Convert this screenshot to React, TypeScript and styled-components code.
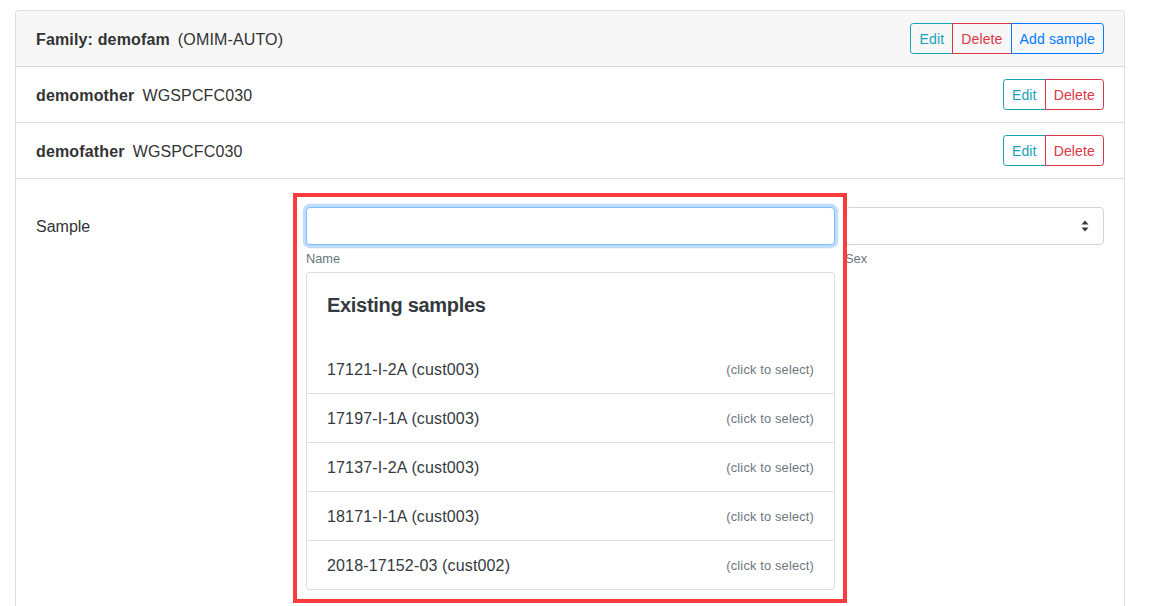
import React from "react";
import styled, { createGlobalStyle } from "styled-components";

const Global = createGlobalStyle`
  html, body { margin: 0; padding: 0; overflow: hidden; background: #fff; }
  body {
    font-family: "Liberation Sans", Arial, Helvetica, sans-serif;
    font-size: 16px;
    line-height: 1.5;
    color: #212529;
  }
  * { box-sizing: border-box; }
`;

const Page = styled.div`
  padding: 10px 0 0 15px;
`;

const Card = styled.div`
  width: 1110px;
  border: 1px solid rgba(0, 0, 0, 0.125);
  border-radius: 4px;
  background: #fff;
`;

const Row = styled.div<{ $header?: boolean }>`
  display: flex;
  align-items: center;
  justify-content: space-between;
  padding: 12px 20px;
  border-bottom: 1px solid rgba(0, 0, 0, 0.125);
  background: ${(p) => (p.$header ? "rgba(0,0,0,0.03)" : "#fff")};
  border-radius: ${(p) => (p.$header ? "3px 3px 0 0" : "0")};
`;

const Title = styled.div`
  display: flex;
  gap: 8px;
  align-items: baseline;
  padding-top: 2px;
  letter-spacing: 0.15px;
  color: #333;
`;

const Strong = styled.span`
  font-weight: 700;
`;

const BtnGroup = styled.div`
  display: flex;
`;

const colors = { info: "#17a2b8", danger: "#dc3545", primary: "#007bff" };

const Btn = styled.button<{ $v: keyof typeof colors }>`
  font-family: inherit;
  font-size: 14px;
  line-height: 21px;
  letter-spacing: 0.15px;
  padding: 5px 8px 3px;
  background: transparent;
  color: ${(p) => colors[p.$v]};
  border: 1px solid ${(p) => colors[p.$v]};
  border-radius: 0;
  margin-left: -1px;
  cursor: pointer;
  &:first-child { border-radius: 3.2px 0 0 3.2px; margin-left: 0; }
  &:last-child { border-radius: 0 3.2px 3.2px 0; }
  &:nth-child(n + 2) { position: relative; z-index: 1; }
`;

const Body = styled.div`
  padding: 28px 20px 20px;
  display: grid;
  grid-template-columns: 260px 1fr;
  column-gap: 10px;
`;

const Label = styled.label`
  padding-top: 8px;
  line-height: 24px;
  color: #333;
`;

const Fields = styled.div`
  display: grid;
  grid-template-columns: 529px 1fr;
  column-gap: 10px;
  align-items: start;
`;

const Field = styled.div`
  display: flex;
  flex-direction: column;
`;

const Highlight = styled(Field)`
  position: relative;
  &::after {
    content: "";
    position: absolute;
    left: -13px;
    right: -12px;
    top: -14px;
    bottom: -13px;
    border: 4px solid #fc3c3c;
    pointer-events: none;
    z-index: 5;
  }
`;

const Input = styled.input`
  height: 38px;
  width: 100%;
  font-family: inherit;
  font-size: 16px;
  padding: 6px 12px;
  border: 1px solid #80bdff;
  border-radius: 4px;
  outline: none;
  box-shadow: 0 0 0 3.2px rgba(0, 123, 255, 0.25);
`;

const SelectBox = styled.div`
  height: 38px;
  border: 1px solid #ced4da;
  border-radius: 4px;
  display: flex;
  align-items: center;
  justify-content: flex-end;
  padding-right: 14px;
`;

const Help = styled.small`
  margin-top: 4px;
  font-size: 12.8px;
  line-height: 19px;
  color: #6c757d;
`;

const Dropdown = styled.div`
  margin-top: 4px;
  border: 1px solid rgba(0, 0, 0, 0.125);
  border-radius: 4px;
  background: #fff;
`;

const DropHead = styled.div`
  padding: 20px;
`;

const DropTitle = styled.h5`
  margin: 0 0 8px;
  font-size: 20px;
  line-height: 24px;
  font-weight: 700;
  letter-spacing: -0.3px;
  color: #343a40;
`;

const Item = styled.div`
  display: flex;
  justify-content: space-between;
  align-items: center;
  padding: 13px 20px 11px;
  line-height: 24px;
  letter-spacing: 0.15px;
  color: #343a40;
  & + & { border-top: 1px solid rgba(0, 0, 0, 0.125); }
`;

const Hint = styled.small`
  font-size: 12.8px;
  letter-spacing: 0.18px;
  color: #6c757d;
`;

const members = ["demomother", "demofather"];
const samples = [
  "17121-I-2A (cust003)",
  "17197-I-1A (cust003)",
  "17137-I-2A (cust003)",
  "18171-I-1A (cust003)",
  "2018-17152-03 (cust002)",
];

const SelectArrows = () => (
  <svg width="8" height="12" viewBox="0 0 8 12">
    <path d="M4 0.5 L7.5 4.5 H0.5 Z M4 11.5 L7.5 7.5 H0.5 Z" fill="#343a40" />
  </svg>
);

export default function App() {
  return (
    <>
      <Global />
      <Page>
        <Card>
          <Row $header>
            <Title>
              <Strong>Family: demofam</Strong>
              <span>(OMIM-AUTO)</span>
            </Title>
            <BtnGroup>
              <Btn $v="info">Edit</Btn>
              <Btn $v="danger">Delete</Btn>
              <Btn $v="primary">Add sample</Btn>
            </BtnGroup>
          </Row>
          {members.map((m) => (
            <Row key={m}>
              <Title>
                <Strong>{m}</Strong>
                <span>WGSPCFC030</span>
              </Title>
              <BtnGroup>
                <Btn $v="info">Edit</Btn>
                <Btn $v="danger">Delete</Btn>
              </BtnGroup>
            </Row>
          ))}
          <Body>
            <Label>Sample</Label>
            <Fields>
              <Highlight>
                <Input />
                <Help>Name</Help>
                <Dropdown>
                  <DropHead>
                    <DropTitle>Existing samples</DropTitle>
                  </DropHead>
                  {samples.map((s) => (
                    <Item key={s}>
                      <span>{s}</span>
                      <Hint>(click to select)</Hint>
                    </Item>
                  ))}
                </Dropdown>
              </Highlight>
              <Field>
                <SelectBox>
                  <SelectArrows />
                </SelectBox>
                <Help>Sex</Help>
              </Field>
            </Fields>
          </Body>
        </Card>
      </Page>
    </>
  );
}
